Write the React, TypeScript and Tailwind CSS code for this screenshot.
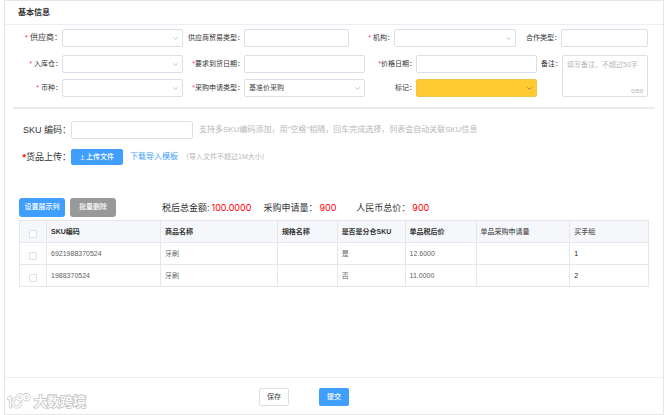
import type { ReactNode } from 'react';
import { ChevronDown } from 'lucide-react';

const box =
  'block h-[18px] w-full rounded-[2px] border border-[#dcdfe6] bg-white px-1 text-[7px] leading-4 text-[#444] outline-none focus:border-[#409eff]';

interface LabelProps {
  id: string;
  required?: boolean;
  children: ReactNode;
}

function Label({ id, required, children }: LabelProps) {
  return (
    <label
      htmlFor={id}
      className="text-right text-[7px] leading-[18px] whitespace-nowrap text-[#333]"
    >
      {required && <span className="text-[#f5317f]">*</span>}
      {children}：
    </label>
  );
}

interface SelectProps {
  id: string;
  value?: string;
  highlight?: boolean;
}

function Select({ id, value = '', highlight }: SelectProps) {
  return (
    <div className="relative">
      <select
        id={id}
        defaultValue={value}
        className={[
          'block h-[18px] w-full appearance-none rounded-[2px] border pr-4 pl-1 text-[7px] leading-4 text-[#444] outline-none',
          highlight
            ? 'border-[#f0c544] bg-[#ffcb33]'
            : 'border-[#dcdfe6] bg-white',
        ].join(' ')}
      >
        <option value={value}>{value}</option>
      </select>
      <ChevronDown
        strokeWidth={3}
        className={[
          'pointer-events-none absolute top-[6px] right-[4px] size-[7px]',
          highlight ? 'text-[#8a7a4a]' : 'text-[#b4b8c0]',
        ].join(' ')}
      />
    </div>
  );
}

const columns = [
  'SKU编码',
  '商品名称',
  '规格名称',
  '是否是分仓SKU',
  '单品税后价',
  '单品采购申请量',
  '买手组',
];

const rows = [
  ['6921988370524', '牙刷', '', '是', '12.6000', '', '1'],
  ['1988370524', '牙刷', '', '否', '11.0000', '', '2'],
];

function Total({ label, value }: { label: string; value: string }) {
  return (
    <div className="flex gap-[2px]">
      <dt>{label}</dt>
      <dd className="font-['Inter',sans-serif] text-[#f00]">{value}</dd>
    </div>
  );
}

function Checkbox({ label }: { label: string }) {
  return (
    <input
      type="checkbox"
      aria-label={label}
      className="mx-auto mt-1 block size-2 appearance-none rounded-[1px] border border-[#dcdfe6] bg-white checked:bg-[#409eff]"
    />
  );
}

function LogoStrokes() {
  return (
    <>
      <path d="M2.500 5.500 4.500 4v10" />
      <path d="M10.500 5C6 5.500 5.500 14 10.500 14c2.500 0 4-1.500 4.500-4" />
      <circle cx="14" cy="4.300" r="2.600" />
      <circle cx="20.500" cy="4.300" r="2.600" />
    </>
  );
}

function Watermark() {
  return (
    <div className="pointer-events-none absolute bottom-[4px] left-[1px] flex items-center gap-[3px]">
      <svg
        viewBox="0 0 25 17"
        className="h-[17px] w-[25px]"
        fill="none"
        strokeLinecap="round"
        strokeLinejoin="round"
      >
        <g stroke="#cacaca" strokeWidth="3.200">
          <LogoStrokes />
        </g>
        <g stroke="#fff" strokeWidth="1.600">
          <LogoStrokes />
        </g>
      </svg>
      <span className="text-[13px] leading-4 font-medium text-white [-webkit-text-stroke:2px_#cacaca] [paint-order:stroke_fill]">
        大数跨境
      </span>
    </div>
  );
}

export default function App() {
  return (
    <div className="flex min-h-screen bg-white pl-1 font-['Liberation_Sans','Noto_Sans_CJK_SC',sans-serif] text-[#333]">
      <div className="relative flex flex-1 flex-col border border-[#e6e6e6]">
        <h1 className="border-b border-[#ebeef5] px-[13px] text-[8px] leading-[23px] font-bold">
          基本信息
        </h1>

        <form className="flex flex-1 flex-col">
          <div className="mx-2 border-b-2 border-[#ececec] pt-1 pr-[7px] pb-[10px]">
            <div className="grid grid-cols-[49px_121fr_61px_105fr_45px_122fr_45px_87fr]">
              <label
                htmlFor="supplier"
                className="text-right text-[8px] leading-[18px] whitespace-nowrap"
              >
                <span className="text-[#f5317f]">* </span>供应商：
              </label>
              <Select id="supplier" />
              <Label id="trade">供应商贸易类型</Label>
              <input id="trade" className={box} />
              <Label id="org" required>
                {' '}
                机构
              </Label>
              <Select id="org" />
              <Label id="coop">合作类型</Label>
              <input id="coop" className={box} />
            </div>

            <div className="mt-2 grid grid-cols-[49px_121fr_61px_121fr_51px_121fr_25px_86fr] gap-y-[6px]">
              <Label id="warehouse" required>
                {' '}
                入库仓
              </Label>
              <Select id="warehouse" />
              <Label id="arrival" required>
                要求到货日期
              </Label>
              <input id="arrival" className={box} />
              <Label id="priceDate" required>
                价格日期
              </Label>
              <input id="priceDate" className={box} />
              <Label id="remark">备注</Label>
              <div className="relative row-span-2">
                <textarea
                  id="remark"
                  maxLength={50}
                  placeholder="填写备注，不超过50字"
                  className="block h-full w-full resize-none rounded-[2px] border border-[#dcdfe6] px-1 py-1 text-[7px] leading-[10px] outline-none placeholder:text-[#b4b8c0]"
                />
                <span className="absolute right-[5px] bottom-[2px] text-[6px] leading-2 text-[#a8abb2]">
                  0/50
                </span>
              </div>
              <Label id="currency" required>
                {' '}
                币种
              </Label>
              <Select id="currency" />
              <Label id="applyType" required>
                采购申请类型
              </Label>
              <Select id="applyType" value="基准价采购" />
              <Label id="mark">标记</Label>
              <Select id="mark" highlight />
            </div>
          </div>

          <div className="mt-3 flex items-center">
            <label
              htmlFor="sku"
              className="w-[66px] text-right text-[9px] leading-[18px] whitespace-nowrap"
            >
              SKU 编码：
            </label>
            <div className="w-[122px]">
              <input id="sku" className={box} />
            </div>
            <p className="ml-[6px] text-[8px] leading-[18px] text-[#b8b8b8]">
              支持多SKU编码添加，用"空格"相隔，回车完成选择，列表会自动关联SKU信息
            </p>
          </div>

          <div className="mt-[9px] flex items-center">
            <span className="w-[66px] text-right text-[9px] leading-[18px] whitespace-nowrap">
              <span className="font-bold text-[#f00]">*</span>货品上传：
            </span>
            <button
              type="button"
              className="flex h-4 w-[52px] items-center justify-center gap-px rounded-[2px] bg-[#409eff] text-[7px] font-medium text-white"
            >
              <svg
                viewBox="0 0 6 6"
                className="size-[5px]"
                fill="none"
                stroke="currentColor"
                strokeWidth="0.700"
              >
                <path d="M3 4.500V.600M1.700 1.900 3 .600l1.300 1.300M.800 5.500h4.400" />
              </svg>
              上传文件
            </button>
            <a href="#template" className="ml-[7px] text-[8px] text-[#409eff]">
              下载导入模板
            </a>
            <span className="ml-1 text-[7px] text-[#b8b8b8]">
              （导入文件不超过1M大小）
            </span>
          </div>

          <div className="mt-8 flex items-center px-[14px]">
            <button
              type="button"
              className="h-[19px] w-[46px] rounded-[3px] bg-[#409eff] text-[7px] font-medium text-white"
            >
              设置展示列
            </button>
            <button
              type="button"
              className="ml-[5px] h-[19px] w-[46px] rounded-[3px] bg-[#999] text-[7px] font-medium text-white"
            >
              批量删除
            </button>
            <dl className="ml-[46px] flex text-[9px] leading-[18px]">
              <Total label="税后总金额:" value="100.0000" />
              <div className="ml-3 flex gap-5">
                <Total label="采购申请量：" value="900" />
                <Total label="人民币总价：" value="900" />
              </div>
            </dl>
          </div>

          <div className="mt-[3px] mb-6 px-[14px]">
            <table className="w-full table-fixed border-collapse text-left text-[7px] leading-[10px]">
              <colgroup>
                <col className="w-[4.3%]" />
                <col className="w-[18.1%]" />
                <col className="w-[18.6%]" />
                <col className="w-[9.5%]" />
                <col className="w-[10.8%]" />
                <col className="w-[11.3%]" />
                <col className="w-[14.9%]" />
                <col className="w-[12.5%]" />
              </colgroup>
              <thead className="bg-[#f5f7fa]">
                <tr className="h-[22px]">
                  <th className="border border-[#e4e7ec]">
                    <Checkbox label="全选" />
                  </th>
                  {columns.map((c, i) => (
                    <th
                      key={c}
                      className={[
                        'border border-[#e4e7ec] px-1 whitespace-nowrap',
                        i < 5 ? 'font-bold' : 'font-medium text-[#555]',
                      ].join(' ')}
                    >
                      {c}
                    </th>
                  ))}
                </tr>
              </thead>
              <tbody>
                {rows.map((row) => (
                  <tr key={row[0]} className="h-[22px]">
                    <td className="border border-[#e4e7ec]">
                      <Checkbox label={row[0]} />
                    </td>
                    {row.map((cell, i) => (
                      <td
                        key={i}
                        className={[
                          'border border-[#e4e7ec] px-1',
                          i === 6 ? 'text-[#222]' : 'text-[#606266]',
                        ].join(' ')}
                      >
                        {cell}
                      </td>
                    ))}
                  </tr>
                ))}
              </tbody>
            </table>
          </div>

          <div className="mt-auto flex justify-center gap-[30px] border-t border-[#ebeef5] pt-[10px] pr-[60px] pb-2">
            <button
              type="button"
              className="h-[18px] w-[30px] rounded-[2px] border border-[#dcdfe6] bg-white text-[7px] text-[#444]"
            >
              保存
            </button>
            <button
              type="submit"
              className="h-[18px] w-[30px] rounded-[2px] bg-[#409eff] text-[7px] font-medium text-white"
            >
              提交
            </button>
          </div>
        </form>

        <Watermark />
      </div>
    </div>
  );
}
